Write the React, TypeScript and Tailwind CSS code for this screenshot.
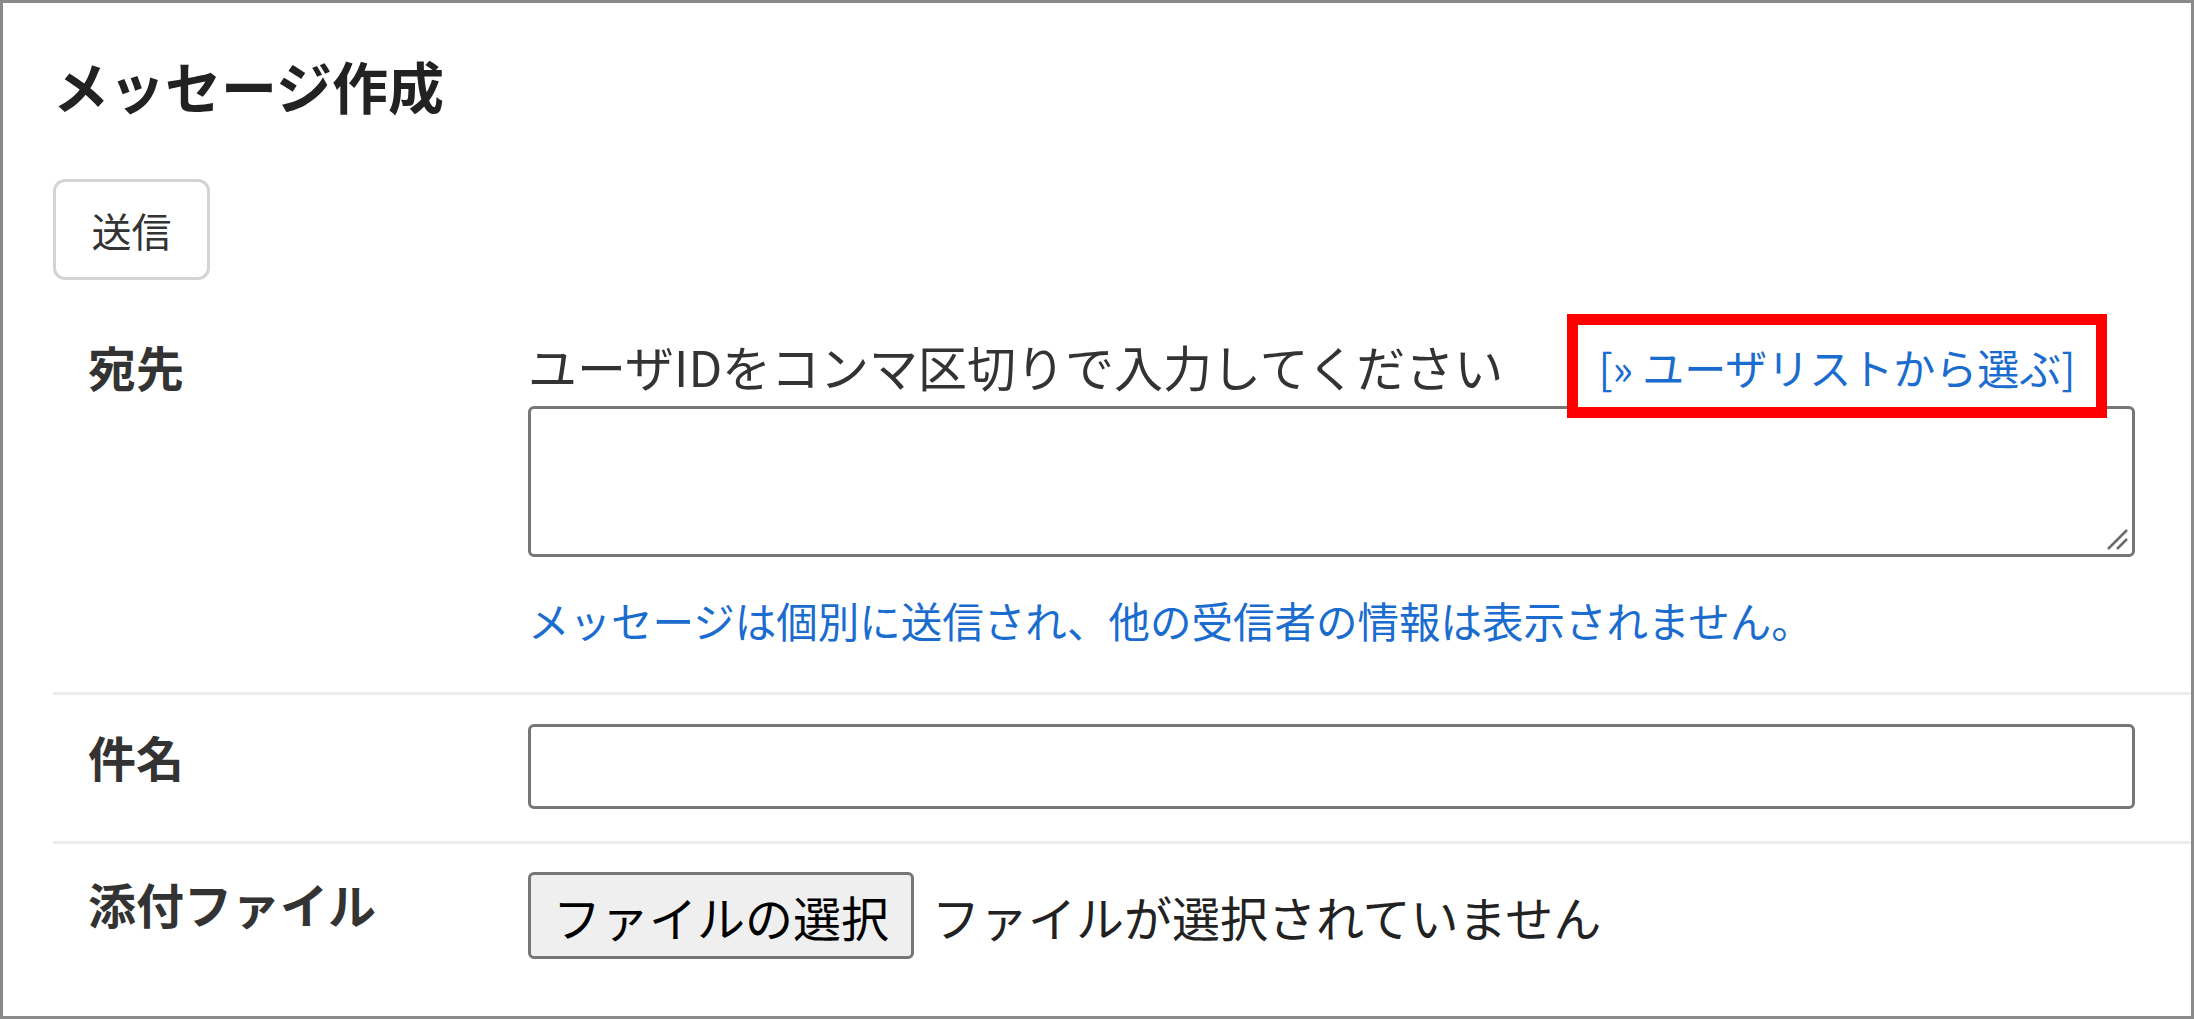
const jp = "font-['Noto_Sans_CJK_JP','Noto_Sans',sans-serif]";

function ResizeGrip() {
  return (
    <svg
      className="absolute right-[6px] bottom-[6px] pointer-events-none"
      width="24"
      height="24"
      viewBox="0 0 24 24"
    >
      <line x1="22" y1="3" x2="3" y2="22" stroke="#6b6b6b" strokeWidth="2.5" />
      <line x1="22" y1="12" x2="12" y2="22" stroke="#6b6b6b" strokeWidth="2.5" />
    </svg>
  );
}

export default function App() {
  return (
    <div className={`w-[2194px] h-[1019px] bg-white border-[3px] border-[#8a8a8a] pl-[50px] pt-[42px] ${jp}`}>
      {/* Title */}
      <h1 className="text-[56px] leading-[80px] font-bold text-[#222]">メッセージ作成</h1>

      {/* Send */}
      <button className="mt-[54px] w-[157px] h-[101px] border-[3px] border-[#d4d4d4] rounded-[12px] bg-white text-[40px] text-[#333]">
        送信
      </button>

      {/* Form table */}
      <div className="mt-[46px]">
        {/* 宛先 */}
        <div className="flex pb-[42px] border-b-[3px] border-[#ececec]">
          <div className="w-[475px] pl-[35px] text-[48px] leading-[80px] font-bold text-[#333]">宛先</div>
          <div className="w-[1607px]">
            <div className="h-[80px] flex items-center justify-between pr-[28px]">
              <span className="text-[49px] leading-[80px] text-[#333]">ユーザIDをコンマ区切りで入力してください</span>
              <a className="relative z-10 h-[104px] w-[540px] flex items-center justify-center bg-white border-[11px] border-[#ff0000] text-[42px] text-[#1a6ccf]">
                [» ユーザリストから選ぶ]
              </a>
            </div>
            <div className="relative">
              <textarea className="block w-full h-[151px] border-[3px] border-[#767676] rounded-[6px] resize-none" />
              <ResizeGrip />
            </div>
            <p className="mt-[33px] text-[41.5px] leading-[60px] text-[#1a6ccf]">
              メッセージは個別に送信され、他の受信者の情報は表示されません。
            </p>
          </div>
        </div>

        {/* 件名 */}
        <div className="flex pt-[29px] pb-[32px] border-b-[3px] border-[#ececec]">
          <div className="w-[475px] pl-[35px] text-[48px] leading-[64px] font-bold text-[#333]">件名</div>
          <input className="w-[1607px] h-[85px] border-[3px] border-[#767676] rounded-[6px]" />
        </div>

        {/* 添付ファイル */}
        <div className="flex pt-[28px]">
          <div className="w-[475px] pl-[35px] text-[48px] leading-[62px] font-bold text-[#333]">添付ファイル</div>
          <div className="flex items-center gap-[18px]">
            <button className="h-[87px] px-[22px] bg-[#efefef] border-[3px] border-[#767676] rounded-[6px] text-[48px] text-black leading-none">
              ファイルの選択
            </button>
            <span className="text-[48px] text-[#222]">ファイルが選択されていません</span>
          </div>
        </div>
      </div>
    </div>
  );
}
